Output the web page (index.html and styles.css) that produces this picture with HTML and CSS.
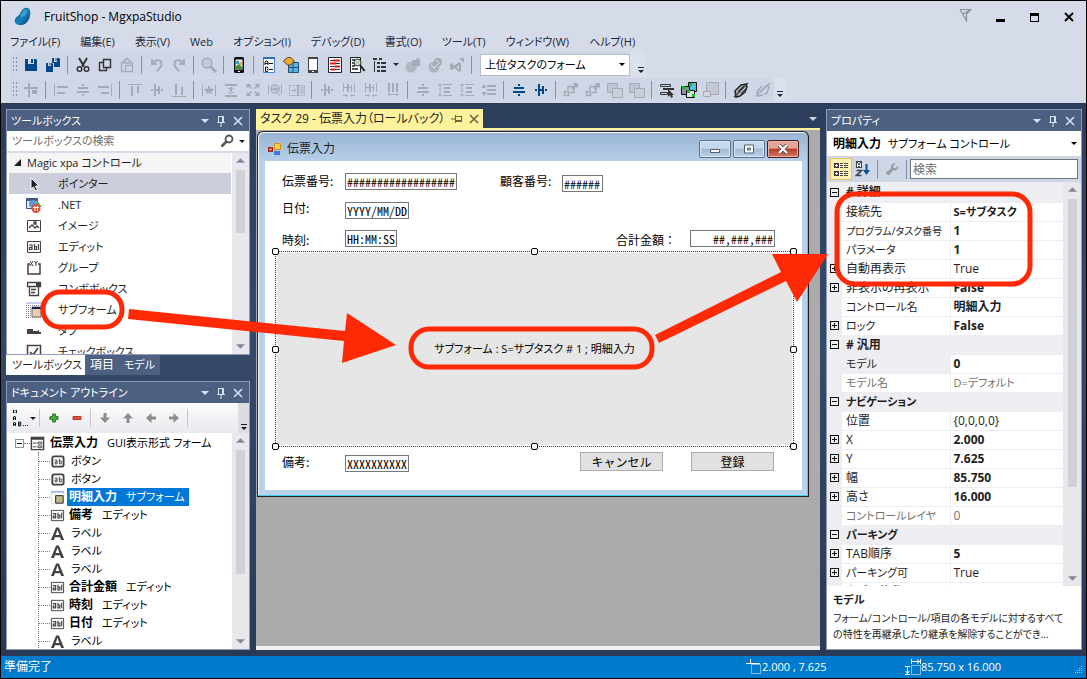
FILE: index.html
```html
<!DOCTYPE html>
<html lang="ja">
<head>
<meta charset="utf-8">
<title>FruitShop - MgxpaStudio</title>
<link rel="stylesheet" href="styles.css">
</head>
<body>
<svg class="defs" aria-hidden="true">
  <defs>
    <linearGradient id="g-drop" x1="0" y1="0" x2="1" y2="1"><stop offset="0" stop-color="#0b3f63"/><stop offset=".5" stop-color="#1583c0"/><stop offset="1" stop-color="#0a3a5c"/></linearGradient>
    <symbol id="caret" viewBox="0 0 8 4"><path d="M0 0h8L4 4z"/></symbol>
    <symbol id="pin" viewBox="0 0 8 12"><path d="M1 1h6v6h1v1H4.500v4h-1V8H0V7h1zM2 2v5h3V2z" fill-rule="evenodd"/></symbol>
    <symbol id="x" viewBox="0 0 10 10"><path d="M1 1l8 8M9 1l-8 8" stroke="currentColor" stroke-width="1.600" fill="none"/></symbol>
    <symbol id="overflow" viewBox="0 0 6 6"><path d="M0 0h6v1H0zM0 3h6L3 6z"/></symbol>
    <symbol id="save" viewBox="0 0 16 16"><path d="M2 2h3v5h6V2h2l1 1v11H2zM8 2h2v4H8z"/></symbol>
    <symbol id="saveall" viewBox="0 0 16 16"><path d="M7 1h2v4h3V1h2l1 1v8H9V6H7zM10.500 1h1v3h-1zM1 6h2v3h3V6h1l1 1v8H1zM4.300 6h1v2h-1z"/></symbol>
    <symbol id="cut" viewBox="0 0 16 16"><path d="M4 1l5 8.500M12 1L7 9.500" stroke="currentColor" stroke-width="2" fill="none"/><circle cx="4.500" cy="12" r="2.300" fill="none" stroke="currentColor" stroke-width="1.500"/><circle cx="11.500" cy="12" r="2.300" fill="none" stroke="currentColor" stroke-width="1.500"/></symbol>
    <symbol id="copy" viewBox="0 0 16 16"><path d="M6.500 2.500h7v8h-7zM6 5.500H2.500v8h7V11" fill="none" stroke="currentColor" stroke-width="1.400"/></symbol>
    <symbol id="paste" viewBox="0 0 16 16"><path d="M5 5.500H2.500v9h4M11 5.500h2.500V8M5 6V3.500h1.500l1-2h1l1 2H11V6zM6.500 8.500h7v6h-7z" fill="none" stroke="currentColor" stroke-width="1.300"/></symbol>
    <symbol id="undo" viewBox="0 0 16 16"><path d="M3 2v5h5M3.500 6.500C6 2 13 2 12.500 7.500c0 2-2 4-5 6.500" fill="none" stroke="currentColor" stroke-width="2"/></symbol>
    <symbol id="redo" viewBox="0 0 16 16"><path d="M13 2v5H8M12.500 6.500C10 2 3 2 3.500 7.500c0 2 2 4 5 6.500" fill="none" stroke="currentColor" stroke-width="2"/></symbol>
    <symbol id="find" viewBox="0 0 16 16"><circle cx="6" cy="6" r="4.800" fill="#c5cad6" stroke="currentColor" stroke-width="1.500"/><path d="M9.500 9.500l5.500 5.500" stroke="currentColor" stroke-width="3"/></symbol>
    <symbol id="phone" viewBox="0 0 16 16"><rect x="3" width="10" height="16" rx="1.500" fill="#111"/><path d="M4.500 2.500h7v10h-7z" fill="#e8efe0"/><path d="M5 4h3v3H5z" fill="#38a2c8"/><path d="M8 5h3v3H8z" fill="#e8b23a"/><path d="M5 9l3-2 3 3v2H5z" fill="#3b8f3b"/><path d="M7 14h2v1H7z" fill="#fff"/></symbol>
    <symbol id="abform" viewBox="0 0 16 16"><path d="M2.500.500h11v15h-11z" fill="#fff" stroke="#4a86cc"/><path d="M2 0h12v2H2z" fill="#2f6fc0"/><path d="M4 8V5l1-1h1l1 1v3M4 6.500h3M4.500 10v4.500h2l.5-1-.5-1.200.5-1-.5-1.300z" fill="none" stroke="#111"/><path d="M8 6h4v1H8zM8 12h4v1H8z" fill="#111"/></symbol>
    <symbol id="package" viewBox="0 0 16 16"><path d="M5.500 5.500h10v10h-10z" fill="#5fb2e0" stroke="#1f4e79"/><path d="M10 6v10M5 10.500h10" stroke="#1f4e79"/><path d="M4.500.500h3l4 3.500-4 4h-3L.500 4z" fill="#eea93a" stroke="#5d3d09"/></symbol>
    <symbol id="tablet" viewBox="0 0 16 16"><path d="M3.500.500h9v15h-9z" fill="#fff" stroke="#444"/><path d="M3 0h10v2H3zM3 13h10v3H3z" fill="#444"/><path d="M7 14h2v1H7z" fill="#fff"/></symbol>
    <symbol id="redlines" viewBox="0 0 16 16"><path d="M1.500.500h13v15h-13z" fill="#fff" stroke="#222"/><path d="M3 3.500h10M3 6.500h10M3 9.500h10M3 12.500h10" stroke="#333"/><path d="M6 3.500h7M3 6.500h6M8 9.500h5M4 12.500h4" stroke="#e11" stroke-width="2"/></symbol>
    <symbol id="docfind" viewBox="0 0 16 16"><path d="M1.500.500h10v15h-10z" fill="#fff" stroke="#222"/><path d="M3 3h3M3 6h2M3 9h3M3 12h6" stroke="#222" stroke-width="1.500"/><circle cx="8.500" cy="5.500" r="3.500" fill="#b8dbe2" stroke="#333"/><path d="M11 8l4.500 6" stroke="#222" stroke-width="2"/><path d="M7 5h3v1H7z" fill="#d9b54c"/></symbol>
    <symbol id="outline" viewBox="0 0 16 16"><path d="M1 1h4v2H1zM5 5h3v2H5zM9 5h5v2H9zM5 9h3v2H5zM9 9h5v2H9zM5 13h3v2H5zM9 13h5v2H9zM2 4h1v11H2zM7 1h3v2H7z"/></symbol>
    <symbol id="globs" viewBox="0 0 16 16"><circle cx="6" cy="10" r="5.500" opacity=".7"/><path d="M7 3h4a2 2 0 0 1 4 0v6h-3l-1 2-1-2H7z"/></symbol>
    <symbol id="globe" viewBox="0 0 16 16"><circle cx="7" cy="10" r="5.500" opacity=".8"/><circle cx="11" cy="5" r="4"/><path d="M4 8l3 3 4-4M9 3l4 4" stroke="#e5e8ef" fill="none"/></symbol>
    <symbol id="vs" viewBox="0 0 16 16"><path d="M1 7l2-1 2.500 2.500L10 5l2 1v8l-2 1-4.500-4L3 13l-2-1zM10 8l-2.500 2 2.500 2z" fill-rule="evenodd"/><path d="M10 1h5v5z"/></symbol>
    <symbol id="a-grid" viewBox="0 0 16 16"><path d="M1 5h14v2H1zM5 1h2v14H5zM9 8h5v4H9z"/></symbol>
    <symbol id="a-left" viewBox="0 0 16 16"><path d="M1 2h1v12H1zM4 4h11v2H4zM4 10h8v2H4z"/></symbol>
    <symbol id="a-mid" viewBox="0 0 16 16"><path d="M7 2h2v2H7zM3 5h10v2H3zM2 9h12v2H2zM7 12h2v2H7z"/></symbol>
    <symbol id="a-right" viewBox="0 0 16 16"><path d="M14 2h1v12h-1zM1 4h11v2H1zM4 10h8v2H4z"/></symbol>
    <symbol id="a-top" viewBox="0 0 16 16"><path d="M1 2h14v1H1zM4 4h2v10H4zM10 4h2v7h-2z"/></symbol>
    <symbol id="a-vmid" viewBox="0 0 16 16"><path d="M5 2h2v12H5zM9 4h2v8H9zM2 7h2v2H2zM12 7h2v2h-2zM7 7h2v2H7z"/></symbol>
    <symbol id="a-bot" viewBox="0 0 16 16"><path d="M1 14h14v1H1zM4 2h2v11H4zM10 5h2v8h-2z"/></symbol>
    <symbol id="a-star" viewBox="0 0 16 16"><path d="M1 3h1v11H1zM14 3h1v11h-1zM3 8h2v1H3zM11 8h2v1h-2zM7 4h2v3l2-1 1 2-2 1 1 2-2 1-1-2-1 2-2-1 1-2-2-1 1-2 2 1z"/></symbol>
    <symbol id="a-i" viewBox="0 0 16 16"><path d="M2 2h12v2H2zM2 13h12v2H2zM7 5h2v7H7zM5 6h6v1H5zM5 11h6v-1H5z"/></symbol>
    <symbol id="a-expand" viewBox="0 0 16 16"><path d="M1 2h5L5 4l2 2-1 1-2-2-2 1zM15 2h-5l1 2-2 2 1 1 2-2 2 1zM1 14h5l-1-2 2-2-1-1-2 2-2-1zM15 14h-5l1-2-2-2 1-1 2 2 2-1z"/></symbol>
    <symbol id="a-lens" viewBox="0 0 16 16"><path d="M1 3h1v9H1zM14 3h1v9h-1z"/><circle cx="8" cy="7" r="4" fill="none" stroke="currentColor" stroke-width="1.500"/><path d="M6 6h4v2H6zM10 10l3 4" stroke="currentColor"/></symbol>
    <symbol id="a-film" viewBox="0 0 16 16"><path d="M.500 3.500h15v10H.500z" fill="none" stroke="currentColor" stroke-dasharray="2 1"/><path d="M8 3h2v11H8zM2 8h3V6l2 2.500L5 11V9H2z"/><path d="M11 5h4v7h-4z" opacity=".5"/></symbol>
    <symbol id="a-sp" viewBox="0 0 16 16"><path d="M2 1h1v9H2zM6 2h2v8H6zM10 3h1v7h-1zM13 1h1v9h-1zM3 5h3v1H3zM8 5h3v1H8zM2 13h3v-1l2 1.500L5 15v-1H2zM14 13h-3v-1l-2 1.500 2 1.500v-1h3z"/></symbol>
    <symbol id="a-sp2" viewBox="0 0 16 16"><path d="M3 1h2v9H3zM7 1h2v9H7zM11 1h2v9h-2zM5 12h6v1H5zM5 11v3l-3-1.500zM11 11v3l3-1.500z"/></symbol>
    <symbol id="a-vsp" viewBox="0 0 16 16"><path d="M6 2h9v1H6zM7 5h6v2H7zM7 9h6v2H7zM6 13h9v1H6zM3 1l2 3H1zM3 15l2-3H1zM2.500 5h1v6h-1z"/></symbol>
    <symbol id="a-vsp2" viewBox="0 0 16 16"><path d="M6 3h9v2H6zM6 7h9v2H6zM6 11h9v2H6zM1 5h4v1H1zM1 10h4v1H1zM3 2l2 3H1zM3 14l2-3H1z"/></symbol>
    <symbol id="z-up" viewBox="0 0 16 16"><path d="M1.500 9.500h4v4h-4z M5 8V4.500h6v6H7" fill="none" stroke="currentColor" stroke-width="1.500"/><path d="M10 1h5v5l-2-1-3 3-2-2 3-3z"/></symbol>
    <symbol id="z-sq" viewBox="0 0 16 16"><path d="M.500 1.500h10v9H.500z" fill="#bfc5d2" stroke="currentColor"/><path d="M5.500 6.500h10v9h-10z" fill="#c9cedb" stroke="currentColor"/></symbol>
    <symbol id="tabsel" viewBox="0 0 16 16"><path d="M1.500 2.500h10v2h-10zM1.500 10.500h7v2h-7z" fill="none" stroke="#333"/><path d="M4 6h11v2H4z" fill="#333"/><path d="M9 7v8l2-2 1 3 2-1-1-2h2z" fill="#333"/></symbol>
    <symbol id="blocks" viewBox="0 0 16 16"><path d="M7.500.500h8v9h-8z" fill="#4fc1da" stroke="#111"/><path d="M.500 4.500h8v8h-8z" fill="#8c9196" stroke="#111"/><path d="M5.500 8.500h8v7h-8z" fill="#dfe3e3" stroke="#111"/><path d="M1 4h3v3H1zM8 1h3v3H8zM6 8h3v3H6zM11 12h3v3h-3z" fill="#12bd26"/></symbol>
    <symbol id="greybox" viewBox="0 0 16 16"><path d="M3.500.500h12v12h-12z" fill="#c4c9d5" stroke="currentColor"/><path d="M.500 9.500h7v5h-7z" fill="#d3d7e1" stroke="currentColor"/></symbol>
    <symbol id="link" viewBox="0 0 16 16"><path d="M2 9l6-6 5-1 1 3-2 5-5 4-4 1z" fill="#b9bcbc" stroke="#222" stroke-width="1.500"/><path d="M5 10l6-6M8 12l5-5M1 15L15 1" stroke="#333" stroke-width="1.300"/></symbol>
    <symbol id="unlink" viewBox="0 0 16 16"><path d="M1 14L15 1M7 4L2 10l1 4 5-1M11 3l3 2-2 6-3 1M5 10l6-6" stroke="currentColor" stroke-width="1.500" fill="none"/></symbol>
    <symbol id="t-pointer" viewBox="0 0 16 16"><path d="M5 2v11l2.500-2 2 4 2-1-2-4H13z" fill="#1e1e1e" stroke="#fff"/></symbol>
    <symbol id="t-net" viewBox="0 0 16 16"><path d="M.500 1.500h11v10H.500z" fill="#e7f0f8" stroke="#33507a"/><path d="M0 1h12v3H0z" fill="#41577b"/><path d="M11 3l5 7H8z" fill="#65b94a"/><circle cx="7" cy="7" r="4" fill="#5b9ad8"/><circle cx="10" cy="11.500" r="4.500" fill="#e04e36"/><path d="M7 10.500h6M9 9v5M11.500 9v5" stroke="#fff"/></symbol>
    <symbol id="t-image" viewBox="0 0 16 16"><path d="M1.500 2.500h13v11h-13z" fill="#fff" stroke="#424242"/><path d="M3 10l3-3 3 3 2-2 2 2M8 4h2v2H8z" fill="none" stroke="#424242" stroke-width="1.300"/></symbol>
    <symbol id="t-edit" viewBox="0 0 16 16"><path d="M1.500 2.500h13v11h-13z" fill="#f7f7f7" stroke="#424242"/><path d="M3 6h3v5M6 8.500H3.500v2H6M8.500 5v5.500h2V7.500h-2M12.500 5v6" fill="none" stroke="#424242" stroke-width="1.200"/></symbol>
    <symbol id="t-group" viewBox="0 0 16 16"><path d="M4 4H2v10h12V4h-2" fill="none" stroke="#424242" stroke-width="1.500"/><path d="M4 1l3 5M7 1L4 6M8.500 1l1.500 2.500L11.500 1M10 3.500V6" stroke="#424242" fill="none"/></symbol>
    <symbol id="t-combo" viewBox="0 0 16 16"><path d="M1.500 1.500h13v4h-13zM3.500 6v8.500h9V6M5 8.500h5M5 11.500h4" fill="none" stroke="#424242" stroke-width="1.300"/><path d="M10 2h4v3h-4z" fill="#424242"/></symbol>
    <symbol id="t-sub" viewBox="0 0 16 16"><path d="M0 3.500h16M0 5.500h6M0 7.500h6M0 9.500h6M0 11.500h6M0 13.500h6M0 15.500h16" stroke="#888" stroke-dasharray="1 1"/><path d="M0 0h16v2H0z" fill="#c9cff1"/><path d="M6 5h9v10H6z" fill="#e3cdb3" stroke="#777"/><path d="M6 5h9v2H6z" fill="#15204e"/></symbol>
    <symbol id="t-tab" viewBox="0 0 16 16"><path d="M1 6h6v2h3V7h3v2h2v2H1z" fill="#424242"/><path d="M8 7h4v1H8z" fill="#fff"/></symbol>
    <symbol id="t-check" viewBox="0 0 16 16"><path d="M1.500 1.500h13v13h-13z" fill="#fff" stroke="#424242" stroke-width="1.500"/><path d="M4 8l3 3 5-7" fill="none" stroke="#424242" stroke-width="1.700"/></symbol>
    <symbol id="d-form" viewBox="0 0 16 16"><path d="M1.500 1.500h13v13h-13z" fill="#fff" stroke="#424242" stroke-width="1.500"/><path d="M1 1h14v3H1z" fill="#424242"/><path d="M3 7.500h4M3 11.500h4" stroke="#424242"/><path d="M8.500 6.500h4v2h-4zM8.500 10.500h4v2h-4z" fill="none" stroke="#424242"/></symbol>
    <symbol id="d-button" viewBox="0 0 16 16"><rect x="2.500" y="2.500" width="12" height="11" rx="2" fill="#fff" stroke="#424242" stroke-width="2"/><path d="M5 6.500h2.500v4M7.500 8.500H5.500v2h2M10 5v5.500h2v-3h-2" fill="none" stroke="#424242"/></symbol>
    <symbol id="d-sub" viewBox="0 0 16 16"><path d="M1.500 1.500h13v13h-13z" fill="#fffef4" stroke="#d7d7ea"/><path d="M1 1h14v2H1z" fill="#a9b6ea"/><path d="M6 6h8v8H6z" fill="#bdb98b" stroke="#222"/></symbol>
    <symbol id="d-label" viewBox="0 0 16 16"><path d="M6.500 1.500h3L15 15h-3.200l-1-3H5.200l-1 3H1zM6 9.500h4L8 4z" fill="#424242" fill-rule="evenodd"/></symbol>
    <symbol id="plus" viewBox="0 0 10 10"><path d="M3.500 1h3v2.500H9v3H6.500V9h-3V6.500H1v-3h2.500z" fill="#4da444" stroke="#2f7a2b"/></symbol>
    <symbol id="minus" viewBox="0 0 10 10"><path d="M1 3.500h8v3H1z" fill="#e0523c" stroke="#b83a2a"/></symbol>
    <symbol id="arrow" viewBox="0 0 10 10"><path d="M3.500 0h3v4.500H10L5 10 0 4.500h3.500z" fill="#8d8d8d"/></symbol>
    <symbol id="wrench" viewBox="0 0 16 16"><path d="M2 14l-1-2 6-5c-1-3 2-6 5-5L9.500 4.500l.5 2 2 .5L14.500 4.500c1 3-2 6-5 5l-5 5.500z" fill="#9a9ca3"/></symbol>
  </defs>
</svg>

<div class="app">
  <header class="chrome">
    <div class="titlebar">
      <svg class="logo" viewBox="0 0 18 20"><path d="M11 1c5-1 6 3 5 8-1 6-6 10-11 9S-1 12 4 9c3-2 3-7 7-8z" fill="url(#g-drop)"/><path d="M9 4c1-2 4-2 4 0s-2 5-5 6-1-3 1-6z" fill="#59b5e3" opacity=".6"/></svg>
      <h1>FruitShop - MgxpaStudio</h1>
      <div class="winbtns">
        <button class="filter" aria-label="フィルター"><svg width="13" height="14" viewBox="0 0 13 14"><path d="M1 1.500h11L7.500 6v6.500L1 1.500M4 6l7-4" fill="none" stroke="#8a8f9c" stroke-width="1.200"/></svg></button>
        <button aria-label="最小化"><svg width="10" height="12"><path d="M0 8h9v3H0z"/></svg></button>
        <button aria-label="最大化"><svg width="10" height="12"><path d="M0 2h9v9H0zM1 5v5h7V5z" fill-rule="evenodd"/></svg></button>
        <button aria-label="閉じる"><svg width="10" height="12" viewBox="0 0 10 12"><path d="M1 2l8 8M9 2l-8 8" stroke="#000" stroke-width="1.800"/></svg></button>
      </div>
    </div>
    <nav class="menubar">
      <button>ファイル(F)</button><button>編集(E)</button><button>表示(V)</button><button>Web</button><button>オプション(I)</button><button>デバッグ(D)</button><button>書式(O)</button><button>ツール(T)</button><button>ウィンドウ(W)</button><button>ヘルプ(H)</button>
    </nav>
    <div class="toolbar">
      <i class="grip"></i>
      <button class="tb blue" aria-label="保存"><svg><use href="#save"/></svg></button>
      <button class="tb blue" aria-label="すべて保存"><svg><use href="#saveall"/></svg></button>
      <i class="sep"></i>
      <button class="tb dark" aria-label="切り取り"><svg><use href="#cut"/></svg></button>
      <button class="tb dark" aria-label="コピー"><svg><use href="#copy"/></svg></button>
      <button class="tb" aria-label="貼り付け"><svg><use href="#paste"/></svg></button>
      <i class="sep"></i>
      <button class="tb" aria-label="元に戻す"><svg><use href="#undo"/></svg></button>
      <button class="tb" aria-label="やり直し"><svg><use href="#redo"/></svg></button>
      <i class="sep"></i>
      <button class="tb" aria-label="検索"><svg><use href="#find"/></svg></button>
      <i class="sep"></i>
      <button class="tb" aria-label="モバイル"><svg><use href="#phone"/></svg></button>
      <i class="sep"></i>
      <button class="tb" aria-label="フォーム"><svg><use href="#abform"/></svg></button>
      <button class="tb" aria-label="コンポーネント"><svg><use href="#package"/></svg></button>
      <button class="tb" aria-label="端末"><svg><use href="#tablet"/></svg></button>
      <button class="tb" aria-label="一覧"><svg><use href="#redlines"/></svg></button>
      <button class="tb" aria-label="参照"><svg><use href="#docfind"/></svg></button>
      <button class="tb dark wide" aria-label="アウトライン"><svg><use href="#outline"/></svg><svg class="caret"><use href="#caret"/></svg></button>
      <button class="tb" aria-label="配置"><svg><use href="#globs"/></svg></button>
      <button class="tb" aria-label="公開"><svg><use href="#globe"/></svg></button>
      <button class="tb" aria-label="Visual Studio"><svg><use href="#vs"/></svg></button>
      <i class="sep"></i>
      <span class="combo"><select aria-label="フォーム選択"><option>上位タスクのフォーム</option></select><svg class="caret small"><use href="#caret"/></svg></span>
      <button class="over" aria-label="オプション"><svg><use href="#overflow"/></svg></button>
    </div>
    <div class="toolbar">
      <i class="grip"></i>
      <button class="tb" aria-label="グリッド"><svg><use href="#a-grid"/></svg></button>
      <i class="sep"></i>
      <button class="tb" aria-label="左揃え"><svg><use href="#a-left"/></svg></button>
      <button class="tb" aria-label="左右中央"><svg><use href="#a-mid"/></svg></button>
      <button class="tb" aria-label="右揃え"><svg><use href="#a-right"/></svg></button>
      <i class="sep"></i>
      <button class="tb" aria-label="上揃え"><svg><use href="#a-top"/></svg></button>
      <button class="tb" aria-label="上下中央"><svg><use href="#a-vmid"/></svg></button>
      <button class="tb" aria-label="下揃え"><svg><use href="#a-bot"/></svg></button>
      <i class="sep"></i>
      <button class="tb" aria-label="幅を揃える"><svg><use href="#a-star"/></svg></button>
      <button class="tb" aria-label="高さを揃える"><svg><use href="#a-i"/></svg></button>
      <button class="tb" aria-label="サイズを揃える"><svg><use href="#a-expand"/></svg></button>
      <button class="tb" aria-label="内容に合わせる"><svg><use href="#a-lens"/></svg></button>
      <button class="tb" aria-label="グリッドに合わせる"><svg><use href="#a-film"/></svg></button>
      <i class="sep"></i>
      <button class="tb" aria-label="左右の間隔"><svg><use href="#a-vmid"/></svg></button>
      <button class="tb" aria-label="左右を広げる"><svg><use href="#a-sp"/></svg></button>
      <button class="tb" aria-label="左右を狭める"><svg><use href="#a-sp"/></svg></button>
      <button class="tb" aria-label="左右の間隔を削除"><svg><use href="#a-sp2"/></svg></button>
      <i class="sep"></i>
      <button class="tb" aria-label="上下の間隔"><svg><use href="#a-mid"/></svg></button>
      <button class="tb" aria-label="上下を広げる"><svg><use href="#a-vsp"/></svg></button>
      <button class="tb" aria-label="上下を狭める"><svg><use href="#a-vsp"/></svg></button>
      <button class="tb" aria-label="上下の間隔を削除"><svg><use href="#a-vsp2"/></svg></button>
      <i class="sep"></i>
      <button class="tb blue" aria-label="フォームの上下中央"><svg><use href="#a-mid"/></svg></button>
      <button class="tb blue" aria-label="フォームの左右中央"><svg><use href="#a-vmid"/></svg></button>
      <i class="sep"></i>
      <button class="tb" aria-label="前へ"><svg><use href="#z-up"/></svg></button>
      <button class="tb" aria-label="後へ"><svg><use href="#z-up"/></svg></button>
      <button class="tb" aria-label="最前面"><svg><use href="#z-sq"/></svg></button>
      <button class="tb" aria-label="最背面"><svg><use href="#z-sq"/></svg></button>
      <i class="sep"></i>
      <button class="tb" aria-label="タブ順序"><svg><use href="#tabsel"/></svg></button>
      <button class="tb" aria-label="自動タブ順序"><svg><use href="#blocks"/></svg></button>
      <button class="tb" aria-label="コンテナ"><svg><use href="#greybox"/></svg></button>
      <i class="sep"></i>
      <button class="tb" aria-label="リンク"><svg><use href="#link"/></svg></button>
      <button class="tb" aria-label="リンク解除"><svg><use href="#unlink"/></svg></button>
      <button class="over" aria-label="オプション"><svg><use href="#overflow"/></svg></button>
    </div>
  </header>

  <main class="workspace">
    <div class="left">
      <section class="dock">
        <div class="panel">
          <div class="phead"><h2>ツールボックス</h2><button aria-label="メニュー"><svg class="caret"><use href="#caret"/></svg></button><button aria-label="固定"><svg class="pin"><use href="#pin"/></svg></button><button aria-label="閉じる"><svg class="x"><use href="#x"/></svg></button></div>
          <div class="search"><input type="text" placeholder="ツールボックスの検索" aria-label="ツールボックスの検索"><svg class="lens" viewBox="0 0 14 14"><circle cx="9" cy="5" r="3.500" fill="none" stroke="#555" stroke-width="1.800"/><path d="M6.500 7.500L1.500 12.500" stroke="#555" stroke-width="2.500"/></svg><svg class="caret small"><use href="#caret"/></svg></div>
          <div class="scrollbox">
            <ul class="tools">
              <li class="group"><svg viewBox="0 0 8 8"><path d="M7 0v7H0z"/></svg>Magic xpa コントロール</li>
              <li class="on"><svg><use href="#t-pointer"/></svg>ポインター</li>
              <li><svg><use href="#t-net"/></svg>.NET</li>
              <li><svg><use href="#t-image"/></svg>イメージ</li>
              <li><svg><use href="#t-edit"/></svg>エディット</li>
              <li><svg><use href="#t-group"/></svg>グループ</li>
              <li><svg><use href="#t-combo"/></svg>コンボボックス</li>
              <li><svg><use href="#t-sub"/></svg>サブフォーム</li>
              <li><svg><use href="#t-tab"/></svg>タブ</li>
              <li><svg><use href="#t-check"/></svg>チェックボックス</li>
            </ul>
            <div class="sbar"><svg class="up"><use href="#caret"/></svg><i class="thumb t1"></i><svg><use href="#caret"/></svg></div>
          </div>
        </div>
        <div class="tabs"><button class="on">ツールボックス</button><button class="kanji">項目</button><button>モデル</button></div>
      </section>
      <section class="panel">
        <div class="phead"><h2>ドキュメント アウトライン</h2><button aria-label="メニュー"><svg class="caret"><use href="#caret"/></svg></button><button aria-label="固定"><svg class="pin"><use href="#pin"/></svg></button><button aria-label="閉じる"><svg class="x"><use href="#x"/></svg></button></div>
        <div class="ptools">
          <button class="sort" aria-label="表示名"><svg class="abc" viewBox="0 0 16 18"><path d="M1 1.500h1.500M1.500 1v3M1 3.500h1.500M5 1.500H3.500M4.500 1v3M5 3.500H3.500M1.500 11V8l1-1 1 1v3M1.500 9.500h2M1.500 17v-3l1-1 1 1v3M1.500 15.500h2M6.500 13v4h2l.5-1-.5-1 .5-1-.5-1zM6.500 15h2" fill="none" stroke="#111"/><path d="M11 16h1v1h-1zM13 16h1v1h-1zM15 16h1v1h-1z"/></svg><svg class="caret small"><use href="#caret"/></svg></button>
          <i class="sep"></i>
          <button aria-label="追加"><svg><use href="#plus"/></svg></button>
          <button aria-label="削除"><svg><use href="#minus"/></svg></button>
          <i class="sep"></i>
          <button aria-label="下へ"><svg><use href="#arrow"/></svg></button>
          <button aria-label="上へ"><svg class="r180"><use href="#arrow"/></svg></button>
          <button aria-label="左へ"><svg class="r90"><use href="#arrow"/></svg></button>
          <button aria-label="右へ"><svg class="r270"><use href="#arrow"/></svg></button>
          <i class="sep"></i>
          <button class="pover" aria-label="オプション"><svg><use href="#overflow"/></svg></button>
        </div>
        <div class="scrollbox">
          <div class="tree">
            <div class="root"><i class="box minus"></i><i class="dots"></i><svg><use href="#d-form"/></svg><b>伝票入力</b><span>GUI表示形式 フォーム</span></div>
            <ul>
              <li><svg><use href="#d-button"/></svg><span>ボタン</span></li>
              <li><svg><use href="#d-button"/></svg><span>ボタン</span></li>
              <li class="on"><svg><use href="#d-sub"/></svg><p><b>明細入力</b><span>サブフォーム</span></p></li>
              <li><svg><use href="#t-edit"/></svg><b>備考</b><span>エディット</span></li>
              <li><svg><use href="#d-label"/></svg><span>ラベル</span></li>
              <li><svg><use href="#d-label"/></svg><span>ラベル</span></li>
              <li><svg><use href="#d-label"/></svg><span>ラベル</span></li>
              <li><svg><use href="#t-edit"/></svg><b>合計金額</b><span>エディット</span></li>
              <li><svg><use href="#t-edit"/></svg><b>時刻</b><span>エディット</span></li>
              <li><svg><use href="#t-edit"/></svg><b>日付</b><span>エディット</span></li>
              <li><svg><use href="#d-label"/></svg><span>ラベル</span></li>
            </ul>
          </div>
          <div class="sbar"><svg class="up"><use href="#caret"/></svg><i class="thumb t2"></i><svg><use href="#caret"/></svg></div>
        </div>
      </section>
    </div>

    <section class="docs">
      <div class="doctabs">
        <div class="doctab"><span>タスク 29 - 伝票入力（ロールバック）</span><button aria-label="固定"><svg class="pin side"><use href="#pin"/></svg></button><button aria-label="閉じる"><svg class="x"><use href="#x"/></svg></button></div>
        <button class="doclist" aria-label="一覧"><svg class="caret"><use href="#caret"/></svg></button>
      </div>
      <div class="surface">
        <div class="form">
          <div class="ftitle">
            <svg class="ficon" viewBox="0 0 14 14"><path d="M0 5h5v5H0z" fill="#b3201c"/><path d="M1.500 6.500h2v2h-2z" fill="#f2b0a0"/><path d="M6.500 1.500h6v6h-6z" fill="#fbd046" stroke="#c8961c"/><path d="M6 9h6v4H6z" fill="#3c7ad6"/></svg>
            <span>伝票入力</span>
            <button aria-label="最小化"><svg viewBox="0 0 12 10"><path d="M1.500 5.500h9v3h-9z" fill="#fff" stroke="#54606e"/></svg></button>
            <button aria-label="最大化"><svg viewBox="0 0 12 10"><path d="M1.500 1h9v8h-9zM4.500 4h3v2h-3z" fill="#fff" fill-rule="evenodd" stroke="#54606e"/></svg></button>
            <button class="fclose" aria-label="閉じる"><svg viewBox="0 0 12 10"><path d="M2 1l8 8M10 1L2 9" stroke="#54404a" stroke-width="4"/><path d="M2 1l8 8M10 1L2 9" stroke="#fff" stroke-width="2.400"/></svg></button>
          </div>
          <div class="client">
            <label class="c l1" for="f1">伝票番号:</label><input class="c f1" id="f1" value="##################">
            <label class="c l2" for="f2">顧客番号:</label><input class="c f2" id="f2" value="######">
            <label class="c l3" for="f3">日付:</label><input class="c f3" id="f3" value="YYYY/MM/DD">
            <label class="c l4" for="f4">時刻:</label><input class="c f4" id="f4" value="HH:MM:SS">
            <label class="c l5" for="f5">合計金額：</label><input class="c f5" id="f5" value="##,###,###">
            <div class="c subform">サブフォーム : S=サブタスク # 1 ; 明細入力<i class="h nw"></i><i class="h n"></i><i class="h ne"></i><i class="h w"></i><i class="h e"></i><i class="h sw"></i><i class="h s"></i><i class="h se"></i></div>
            <label class="c l6" for="f6">備考:</label><input class="c f6" id="f6" value="XXXXXXXXXX">
            <button class="c b1">キャンセル</button>
            <button class="c b2">登録</button>
          </div>
        </div>
      </div>
    </section>

    <section class="panel props">
      <div class="phead"><h2>プロパティ</h2><button aria-label="メニュー"><svg class="caret"><use href="#caret"/></svg></button><button aria-label="固定"><svg class="pin"><use href="#pin"/></svg></button><button aria-label="閉じる"><svg class="x"><use href="#x"/></svg></button></div>
      <button class="object"><b>明細入力</b><span>サブフォーム コントロール</span><svg class="caret small"><use href="#caret"/></svg></button>
      <div class="propbar">
        <button class="on" aria-label="カテゴリ別"><svg viewBox="0 0 16 16"><path d="M1 2h5v5H1zM1 10h5v5H1z" fill="#333"/><path d="M2 4.500h3M3.500 3v3M2 12.500h3M3.500 11v3" stroke="#fff"/><path d="M7 2.500h3M11 2.500h4M7 4.500h3M11 4.500h4M7 6.500h3M11 6.500h4M7 10.500h3M11 10.500h4M7 12.500h3M11 12.500h4M7 14.500h3M11 14.500h4" stroke="#444"/></svg></button>
        <button aria-label="アルファベット順"><svg viewBox="0 0 16 16"><path d="M1 0h6v7H1z" fill="#444"/><path d="M2.500 6V2.500l1.500-1 1.500 1V6M2.500 4.500h3" fill="none" stroke="#fff"/><path d="M1.500 9.500h5l-5 5h5" fill="none" stroke="#444" stroke-width="1.600"/><path d="M10.500 3h2v6H15l-3.500 5L8 9h2.500z" fill="#0f4f98"/></svg></button>
        <i class="sep"></i>
        <button aria-label="プロパティ ページ"><svg class="wrench"><use href="#wrench"/></svg></button>
        <i class="sep"></i>
        <input type="text" placeholder="検索" aria-label="プロパティの検索">
      </div>
      <div class="scrollbox">
        <div class="gridwrap">
        <table>
          <colgroup><col class="gut"><col class="nm"><col></colgroup>
          <tr class="cat"><td><i class="box minus"></i></td><th colspan="2"># 詳細</th></tr>
          <tr><td></td><th>接続先</th><td class="kana"><b>S=サブタスク</b></td></tr>
          <tr><td></td><th class="long">プログラム/タスク番号</th><td><b>1</b></td></tr>
          <tr><td></td><th class="kana">パラメータ</th><td><b>1</b></td></tr>
          <tr><td><i class="box"></i></td><th>自動再表示</th><td>True</td></tr>
          <tr><td><i class="box"></i></td><th>非表示の再表示</th><td><b>False</b></td></tr>
          <tr><td></td><th class="kana">コントロール名</th><td><b>明細入力</b></td></tr>
          <tr><td><i class="box"></i></td><th class="kana">ロック</th><td><b>False</b></td></tr>
          <tr class="cat"><td><i class="box minus"></i></td><th colspan="2"># 汎用</th></tr>
          <tr class="sel"><td></td><th class="kana">モデル</th><td><b>0</b></td></tr>
          <tr class="off"><td></td><th class="kana">モデル名</th><td class="kana">D=デフォルト</td></tr>
          <tr class="cat"><td><i class="box minus"></i></td><th class="kana" colspan="2">ナビゲーション</th></tr>
          <tr><td></td><th>位置</th><td>{0,0,0,0}</td></tr>
          <tr><td><i class="box"></i></td><th>X</th><td><b>2.000</b></td></tr>
          <tr><td><i class="box"></i></td><th>Y</th><td><b>7.625</b></td></tr>
          <tr><td><i class="box"></i></td><th>幅</th><td><b>85.750</b></td></tr>
          <tr><td><i class="box"></i></td><th>高さ</th><td><b>16.000</b></td></tr>
          <tr class="off"><td></td><th class="kana">コントロールレイヤ</th><td>0</td></tr>
          <tr class="cat"><td><i class="box minus"></i></td><th class="kana" colspan="2">パーキング</th></tr>
          <tr><td><i class="box"></i></td><th>TAB順序</th><td><b>5</b></td></tr>
          <tr><td><i class="box"></i></td><th class="kana">パーキング可</th><td>True</td></tr>
          <tr><td></td><th>タブの移動</th><td></td></tr>
        </table>
        </div>
        <div class="sbar"><svg class="up"><use href="#caret"/></svg><i class="thumb t3"></i><svg><use href="#caret"/></svg></div>
      </div>
      <div class="desc"><h3>モデル</h3><p>フォーム/コントロール/項目の各モデルに対するすべて<br>の特性を再継承したり継承を解除することができ...</p></div>
    </section>
  </main>

  <footer class="status">
    <span class="ready">準備完了</span>
    <span class="pos"><svg viewBox="0 0 16 16"><path d="M0 4.500h14M4.500 0v5" stroke="#fff"/><path d="M5.500 5.500h9v9h-9z" fill="none" stroke="#fff" stroke-dasharray="1 1"/></svg>2.000 , 7.625</span>
    <span class="size"><svg viewBox="0 0 16 16"><path d="M6.500 6.500h9v9h-9z" fill="none" stroke="#fff" stroke-dasharray="1 1"/><path d="M6.500 0v5M15.500 0v5M7 2.500h8M12 .500l2.500 2L12 4.500M0 7.500h5M0 15.500h5M2.500 8v7M.500 12l2 2.500 2-2.500" fill="none" stroke="#fff"/></svg>85.750 x 16.000</span>
    <svg class="corner" viewBox="0 0 8 8"><path d="M6 0h1v1H6zM4 2h1v1H4zM6 2h1v1H6zM2 4h1v1H2zM4 4h1v1H4zM6 4h1v1H6zM0 6h1v1H0zM2 6h1v1H2zM4 6h1v1H4zM6 6h1v1H6z" fill="#9fd0f2"/></svg>
  </footer>

  <svg class="marks" width="1087" height="679" aria-hidden="true">
    <g fill="none" stroke="#ff2a05" stroke-width="5"><rect x="43" y="292" width="79" height="35" rx="17"/><rect x="411" y="329" width="241" height="38" rx="18"/><rect x="837" y="194" width="193" height="90" rx="18"/></g>
    <g fill="#ff2a05"><path d="M129 309L345 331 347 313 396 345 342 363 344 341 128 319z"/><path d="M655 335L781 272 772 254H828L797 302 786 281 659 343z"/></g>
  </svg>
</div>
</body>
</html>
```

FILE: styles.css
```css
* { box-sizing: border-box; }
body {
  margin: 0;
  font: 12px/16px "Open Sans", "Noto Sans CJK JP", sans-serif;
  font-feature-settings: "palt";
  color: #1e1e1e;
}
h1, h2, h3, p, ul { margin: 0; padding: 0; font-size: 12px; font-weight: 400; list-style: none; }
button, input, select { font: inherit; font-feature-settings: inherit; color: inherit; border: 0; padding: 0; background: none; border-radius: 0; white-space: nowrap; }
svg { display: block; flex: none; fill: currentColor; }
b { font-weight: 700; }
.defs { position: absolute; width: 0; height: 0; }

.app {
  position: relative;
  display: flex;
  flex-direction: column;
  height: 100vh;
  border: 1px solid #000;
  overflow: hidden;
  background: linear-gradient(#293955, #354969 50%, #293955);
}
.caret { width: 8px; height: 4px; }
.caret.small { width: 6px; height: 3px; }
.pin { width: 8px; height: 12px; }
.pin.side { transform: rotate(90deg); }
.x { width: 10px; height: 10px; }

.chrome { background: #d6dbe9; color: #1b293e; padding-bottom: 2px; border-bottom: 1px solid #293955; }
.titlebar { display: flex; align-items: center; height: 30px; padding: 2px 12px 0 13px; }
.logo { width: 18px; height: 20px; margin-right: 12px; }
.titlebar h1 { flex: 1; color: #000; }
.winbtns { display: flex; gap: 24px; color: #000; }
.winbtns button { display: flex; align-items: center; }
.winbtns .filter { padding-bottom: 4px; }
.menubar { display: flex; gap: 20px; height: 21px; padding: 2px 9px; font-size: 11px; }
.toolbar { display: flex; align-items: center; width: max-content; height: 25px; margin: 0 0 1px 9px; background: #cfd6e5; }
.toolbar + .toolbar { height: 23px; margin-bottom: 0; }
.grip {
  width: 6px; height: 17px; margin: 0 2px;
  background: radial-gradient(circle, #8290ab 1px, transparent 1px) 0 0 / 3px 4px;
}
.tb { display: flex; justify-content: center; align-items: center; width: 22px; height: 22px; color: #a5aab7; }
.tb svg { width: 16px; height: 16px; }
.tb svg.caret { width: 6px; height: 3px; color: #1b293e; }
.tb.blue { color: #00488a; }
.tb.dark { color: #333; }
.tb.wide { width: 34px; gap: 5px; }
.sep { flex: none; width: 1px; height: 18px; margin: 0 4px 0 3px; background: #8591ab; }
.combo { display: flex; align-items: center; width: 150px; height: 22px; margin-left: 4px; padding-right: 4px; background: #fff; border: 1px solid #b5bdcf; color: #000; font-size: 11px; }
.combo select { flex: 1; min-width: 0; appearance: none; padding: 0 4px; }
.over { align-self: stretch; display: flex; align-items: flex-end; width: 11px; padding: 0 0 4px 3px; background: #dce0ec; color: #1b293e; }
.combo + .over { width: 16px; padding-left: 8px; }
.over svg { width: 6px; height: 6px; }

.workspace { flex: 1; min-height: 0; display: grid; grid-template-columns: 244px minmax(0, 1fr) 256px; gap: 6px; padding: 5px 4px 6px 5px; }
.left { display: grid; grid-template-rows: 266fr 269fr; gap: 6px; min-height: 0; }
.dock { display: flex; flex-direction: column; min-height: 0; }
.panel { flex: 1; display: flex; flex-direction: column; min-height: 0; background: #fff; border: 1px solid #8e9bbc; }
.phead { flex: none; display: flex; align-items: center; gap: 8px; height: 21px; padding: 0 6px 0 4px; background: #4d6082; color: #d9e0f0; }
.phead h2 { flex: 1; font-size: 11px; color: #fff; }
.phead button { display: flex; }
.search { flex: none; display: flex; align-items: center; gap: 5px; height: 22px; padding: 0 4px 0 5px; border-bottom: 2px solid #d6dbe9; font-size: 11px; }
.search input { flex: 1; min-width: 0; }
input::placeholder { color: #6d6d6d; opacity: 1; }
.lens { width: 14px; height: 14px; }
.scrollbox { flex: 1; min-height: 0; display: flex; overflow: hidden; }
.sbar { flex: none; display: flex; flex-direction: column; align-items: center; width: 17px; padding: 5px 0; background: #e8e8ec; color: #868999; }
.sbar svg { width: 9px; height: 5px; margin-top: auto; }
.sbar svg.up { margin: 0 0 7px; transform: rotate(180deg); }
.thumb { width: 9px; background: #d0d1d7; }
.t1 { height: 33%; }
.t2 { height: 60%; }
.t3 { height: 73%; }

.tools { flex: 1; padding: 0 1px 0 2px; font-size: 11px; }
.tools li { display: flex; align-items: center; gap: 16px; height: 21px; padding-left: 17px; white-space: nowrap; }
.tools svg { width: 16px; height: 16px; }
.tools .group { gap: 5px; height: 20px; padding-left: 5px; background: #f5f5f5; }
.tools .group svg { width: 8px; height: 8px; }
.tools .on { background: #cccedb; }
.tabs { display: flex; font-size: 11px; }
.tabs button { height: 20px; padding: 0 5px; background: #4d6082; color: #fff; }
.tabs .kanji { font-size: 12px; }
.tabs button.on { padding: 0 3px 0 6px; background: #fff; color: #1e1e1e; }

.ptools { flex: none; display: flex; align-items: center; height: 30px; padding-left: 3px; background: linear-gradient(#fcfcfc, #e9e9ef); border-radius: 3px; }
.ptools button { display: flex; align-items: center; justify-content: center; width: 23px; height: 22px; }
.ptools svg { width: 10px; height: 10px; }
.ptools .sort { width: 27px; gap: 2px; }
.ptools .abc { width: 16px; height: 18px; }
.ptools .caret { width: 6px; height: 3px; }
.ptools .sep { height: 18px; margin: 0 2px; background: #c5c5cc; }
.ptools .pover { align-self: stretch; align-items: flex-end; width: 11px; height: auto; margin-left: auto; padding-bottom: 3px; background: #dcdce2; }
.ptools .pover svg { width: 6px; height: 6px; }
.r180 { transform: rotate(180deg); }
.r90 { transform: rotate(90deg); }
.r270 { transform: rotate(270deg); }

.tree { flex: 1; padding-top: 1px; white-space: nowrap; overflow: hidden; color: #000; }
.tree svg { width: 15px; height: 15px; }
.tree span { font-size: 11px; }
.tree b + span { margin-left: 9px; }
.root { display: flex; align-items: center; height: 18px; padding-left: 8px; }
.root b { margin-left: 5px; }
.box { display: block; width: 9px; height: 9px; border: 1px solid #111; background: linear-gradient(#111, #111) center / 5px 1px no-repeat, linear-gradient(#111, #111) center / 1px 5px no-repeat; }
.box.minus { background: linear-gradient(#111, #111) center / 5px 1px no-repeat; }
.root .box { border-color: #919191; }
.dots { width: 6px; border-top: 1px dotted #777; }
.tree ul { margin-left: 31px; border-left: 1px dotted #777; }
.tree li { display: flex; align-items: center; height: 18px; }
.tree li::before { content: ""; width: 11px; border-top: 1px dotted #777; }
.tree li > b { margin-left: 4px; }
.tree li > svg + span { margin-left: 6px; }
.tree .on p { display: flex; height: 18px; align-items: center; margin-left: 2px; padding: 0 4px 0 2px; background: #0078d7; color: #fff; }

.docs { display: flex; flex-direction: column; min-height: 0; }
.doctabs { flex: none; display: flex; justify-content: space-between; height: 21px; border-bottom: 2px solid #fff29d; }
.doctab { display: flex; align-items: center; gap: 8px; padding: 0 4px; background: #fff29d; color: #1e1e1e; }
.doctab button, .doclist { display: flex; align-items: center; color: #6b6440; }
.doclist { color: #ced4e2; padding-right: 3px; }
.surface { flex: 1; min-height: 0; padding: 1px; background: #ababab; border-bottom: 4px solid #f0f0f0; }

.form { width: 552px; height: 366px; padding: 0 6px 6px 7px; border: 1px solid #222; border-right-color: #1a1a1a; border-radius: 6px 6px 0 0; background: linear-gradient(#98b4d2, #b9d1ea 30px); box-shadow: inset -1px -1px #3fd0ea, inset 1px 1px #eef4fb; }
.ftitle { display: flex; align-items: center; gap: 2px; height: 29px; padding: 5px 3px 0; }
.ftitle span { flex: 1; padding-left: 3px; }
.ficon { width: 14px; height: 14px; }
.ftitle button { display: flex; align-items: center; justify-content: center; width: 32px; height: 18px; border: 1px solid #5c6f88; border-radius: 2px; background: linear-gradient(#c5d8ec 45%, #a4bcd6 50%, #bad0e8); box-shadow: inset 0 0 0 1px #dbe8f5; }
.ftitle button svg { width: 12px; height: 10px; }
.ftitle .fclose { border-color: #4a1c22; background: linear-gradient(#e5a596 45%, #b93a25 50%, #d47a66); box-shadow: inset 0 0 0 1px #e7b2a8; }
.client { position: relative; height: 329px; background: #fff; color: #000; }

/* Controls placed on the form's design canvas */
.c { position: absolute; }
.client label, .client button { font-family: "Noto Sans CJK JP", sans-serif; font-feature-settings: normal; }
.client input { height: 17px; padding: 0 1px; background: #fff; border: 1px solid #767676; font-family: "Noto Sans CJK JP", "Liberation Mono", monospace; font-feature-settings: "hwid"; }
.l1 { left: 17px; top: 12px; }
.l2 { left: 235px; top: 12px; }
.l3 { left: 17px; top: 39px; }
.l4 { left: 17px; top: 71px; }
.l5 { left: 351px; top: 71px; }
.l6 { left: 17px; top: 293px; }
.f1 { left: 80px; top: 12px; width: 112px; }
.f2 { left: 297px; top: 14px; width: 41px; }
.f3 { left: 80px; top: 41px; width: 64px; }
.f4 { left: 80px; top: 69px; width: 52px; }
.f5 { left: 425px; top: 69px; width: 85px; text-align: right; }
.f6 { left: 80px; top: 294px; width: 64px; }
.subform { left: 10px; top: 90px; width: 519px; height: 196px; display: flex; align-items: center; justify-content: center; background: #e6e6e6; border: 1px dotted #444; outline: 1px solid #fff; outline-offset: -2px; font-size: 11px; }
.h { position: absolute; width: 7px; height: 7px; background: #fff; border: 1px solid #000; border-radius: 2px; }
.nw, .n, .ne { top: -4px; }
.w, .e { top: 94px; }
.sw, .s, .se { bottom: -4px; }
.nw, .w, .sw { left: -4px; }
.n, .s { left: 255px; }
.ne, .e, .se { right: -4px; }
.b1, .b2 { top: 291px; width: 83px; height: 19px; background: #e1e1e1; border: 1px solid #adadad; }
.b1 { left: 315px; }
.b2 { left: 426px; }

.object { flex: none; display: flex; align-items: center; gap: 7px; height: 25px; padding: 0 4px 0 6px; color: #000; }
.object span { font-size: 11px; }
.object .caret { margin-left: auto; }
.propbar { flex: none; display: flex; align-items: center; height: 26px; padding: 0 3px; background: #cfd6e5; }
.propbar button { display: flex; align-items: center; justify-content: center; width: 22px; height: 22px; }
.propbar button svg { width: 16px; height: 16px; }
.propbar button .wrench { width: 14px; height: 14px; }
.propbar .on { background: #fff2b5; border: 1px solid #e5c365; }
.propbar .sep { height: 19px; margin: 0 3px; }
.propbar input { flex: 1; min-width: 0; height: 20px; padding: 0 2px; background: #fff; border: 1px solid #777; }
.gridwrap { flex: 1; overflow: hidden; padding-top: 1px; background: #eeeef2; }
table { width: 100%; table-layout: fixed; border-collapse: collapse; }
.gut { width: 15px; }
.nm { width: 108px; }
tr { height: 19px; }
td, th { height: 19px; padding: 0 0 0 3px; line-height: 18px; font-weight: 400; text-align: left; white-space: nowrap; overflow: hidden; background: #fff; border-bottom: 1px solid #eeeef2; }
th { padding-left: 4px; border-right: 1px solid #eeeef2; }
td:first-child, .cat th, .sel th { background: #eeeef2; }
.cat th { font-weight: 700; }
.kana { font-size: 11px; }
.long { font-size: 10px; }
.off { color: #717171; }
.props .sbar { width: 18px; }
.desc { flex: none; height: 63px; padding: 6px; overflow: hidden; }
.desc h3 { font-size: 11px; font-weight: 700; }
.desc p { font-size: 10px; padding-top: 2px; white-space: nowrap; }

.status { flex: none; display: flex; align-items: center; height: 22px; background: #007acc; color: #fff; padding: 0 3px; }
.ready { flex: 1; }
.pos, .size { display: flex; align-items: center; font-size: 11px; }
.pos { width: 159px; }
.size { width: 170px; }
.status svg { width: 16px; height: 16px; }
.status .corner { width: 8px; height: 8px; align-self: flex-end; margin-bottom: 4px; }

/* Callouts drawn over the window */
.marks { position: absolute; left: -1px; top: -1px; pointer-events: none; }
```
